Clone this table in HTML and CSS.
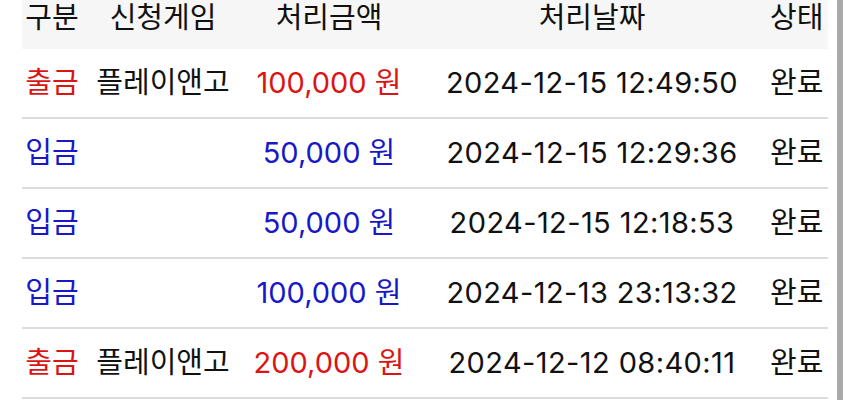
FILE: index.html
```html
<!DOCTYPE html>
<html lang="ko">
<head>
    <meta charset="UTF-8">
    <meta name="viewport" content="width=device-width, initial-scale=1.0">
    <title>처리내역</title>
    <link rel="stylesheet" href="styles.css">
</head>
<body>
    <div class="page">
        <table class="history">
            <colgroup>
                <col class="c-type">
                <col class="c-game">
                <col class="c-amount">
                <col class="c-date">
                <col class="c-state">
            </colgroup>
            <thead>
                <tr>
                    <th>구분</th>
                    <th>신청게임</th>
                    <th>처리금액</th>
                    <th>처리날짜</th>
                    <th class="state">상태</th>
                </tr>
            </thead>
            <tbody>
                <tr class="out">
                    <td class="kind">출금</td>
                    <td>플레이앤고</td>
                    <td class="money">100,000 원</td>
                    <td class="date">2024-12-15 12:49:50</td>
                    <td class="state">완료</td>
                </tr>
                <tr class="in">
                    <td class="kind">입금</td>
                    <td></td>
                    <td class="money">50,000 원</td>
                    <td class="date">2024-12-15 12:29:36</td>
                    <td class="state">완료</td>
                </tr>
                <tr class="in">
                    <td class="kind">입금</td>
                    <td></td>
                    <td class="money">50,000 원</td>
                    <td class="date">2024-12-15 12:18:53</td>
                    <td class="state">완료</td>
                </tr>
                <tr class="in">
                    <td class="kind">입금</td>
                    <td></td>
                    <td class="money">100,000 원</td>
                    <td class="date">2024-12-13 23:13:32</td>
                    <td class="state">완료</td>
                </tr>
                <tr class="out">
                    <td class="kind">출금</td>
                    <td>플레이앤고</td>
                    <td class="money">200,000 원</td>
                    <td class="date">2024-12-12 08:40:11</td>
                    <td class="state">완료</td>
                </tr>
            </tbody>
        </table>
        <div class="scrollbar"></div>
    </div>
</body>
</html>
```
FILE: styles.css
```css
body {
    margin: 0;
    background-color: #fff;
    font-family: 'Inter', 'Noto Sans CJK KR', sans-serif;
    color: #111;
    overflow: hidden;
}
.page {
    display: flex;
    height: 400px;
    padding-left: 22px;
}
.history {
    width: 806px;
    border-collapse: collapse;
    table-layout: fixed;
    align-self: flex-start;
    font-size: 29px;
    line-height: 36px;
}
.c-type { width: 60px; }
.c-game { width: 162px; }
.c-amount { width: 170px; }
.c-date { width: 356px; }
.c-state { width: 58px; }
th {
    font-weight: normal;
    height: 49px;
    padding: 0;
    vertical-align: top;
    background-color: #f6f6f6;
    text-align: center;
    white-space: nowrap;
}
td {
    height: 68px;
    padding: 0;
    text-align: center;
    white-space: nowrap;
    border-bottom: 2px solid #dcdcdc;
}
th.state, td.state {
    padding-right: 6px;
}
.date {
    letter-spacing: 0.4px;
}
.out .kind, .out .money {
    color: #dc1414;
}
.in .kind, .in .money {
    color: #1818c8;
}
.scrollbar {
    width: 6px;
    margin-left: 9px;
    background-color: #a9a9a9;
}
```
